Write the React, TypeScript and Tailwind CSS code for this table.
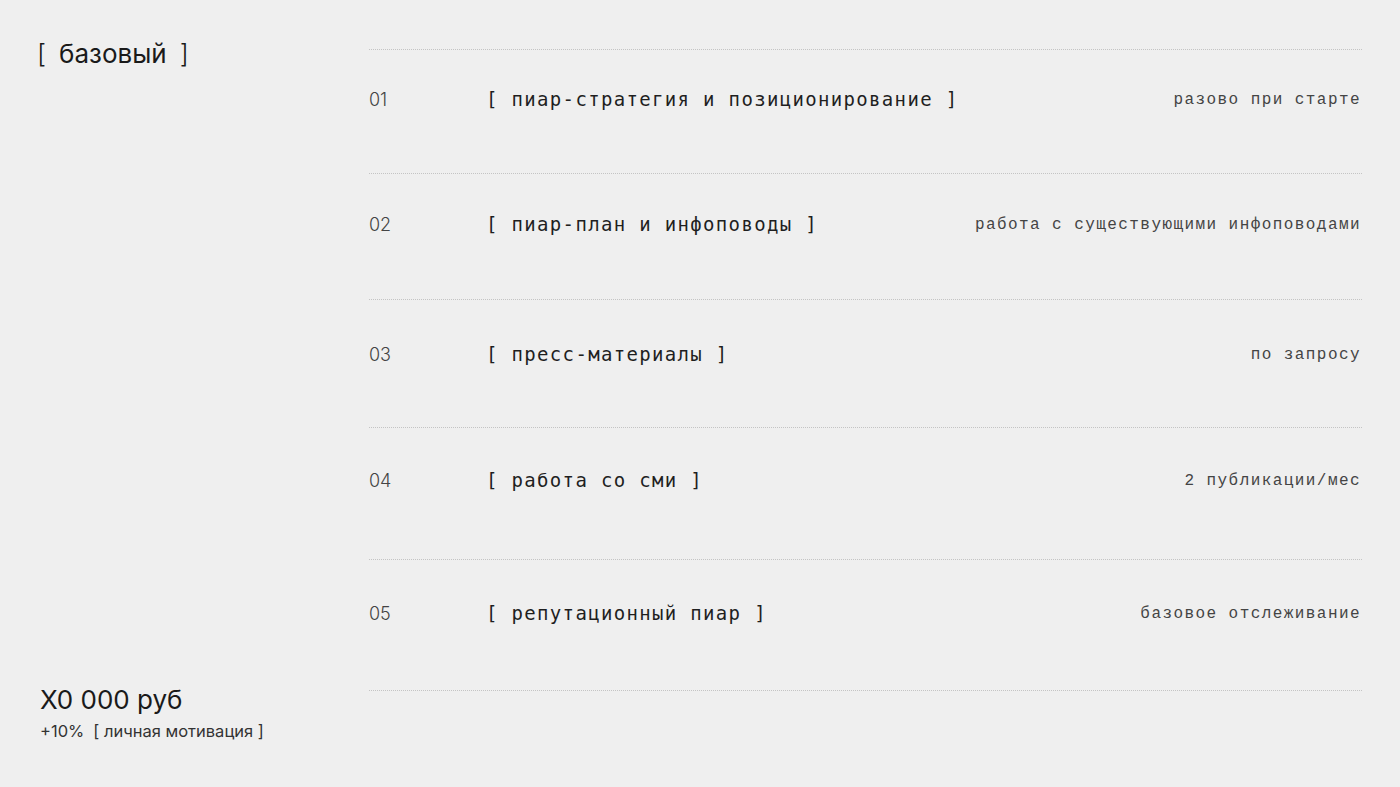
import React from "react";

const rows = [
  { num: "01", title: "пиар-стратегия и позиционирование", note: "разово при старте", h: "h-[124px]", pt: "pt-[40px]" },
  { num: "02", title: "пиар-план и инфоповоды", note: "работа с существующими инфоповодами", h: "h-[126px]", pt: "pt-[41px]" },
  { num: "03", title: "пресс-материалы", note: "по запросу", h: "h-[128px]", pt: "pt-[45px]" },
  { num: "04", title: "работа со сми", note: "2 публикации/мес", h: "h-[132px]", pt: "pt-[43px]" },
  { num: "05", title: "репутационный пиар", note: "базовое отслеживание", h: "h-[132px]", pt: "pt-[44px]" },
];

function App() {
  return (
    <div className="flex h-[787px] w-[1400px] bg-[#efefef] font-['Inter','Liberation_Sans',sans-serif] text-[#1a1a1a]">
      {/* left column: plan name and price */}
      <div className="flex w-[369px] flex-col justify-between pb-[46px] pl-[37px] pt-[38px]">
        <div className="flex items-center gap-[13px] text-[26px] leading-[32px]">
          <span className="font-light">[</span>
          <span>базовый</span>
          <span className="font-light">]</span>
        </div>
        <div className="pl-[3px]">
          <div className="text-[26px] leading-[32px]">X0 000 руб</div>
          <div className="mt-[5px] flex gap-[9px] text-[16.5px] leading-[20px] text-[#333]">
            <span>+10%</span>
            <span>[ личная мотивация ]</span>
          </div>
        </div>
      </div>

      {/* right column: list of services */}
      <div className="w-[993px] pt-[49px]">
        {rows.map((row, i) => (
          <div
            key={row.num}
            className={`flex items-start border-t border-dotted border-[#c4c4c4] ${row.h} ${row.pt} ${
              i === rows.length - 1 ? "border-b" : ""
            }`}
          >
            <div className="w-[117px] text-[18px] font-light leading-[20px] text-[#444]">{row.num}</div>
            <div className="-mt-px flex-1 font-['DejaVu_Sans_Mono',monospace] text-[19px] leading-[20px] tracking-[1.33px] text-[#1f1f1f]">
              [ {row.title} ]
            </div>
            <div className="pr-[1px] text-right font-['Liberation_Mono',monospace] text-[16px] leading-[20px] tracking-[1.43px] text-[#444]">
              {row.note}
            </div>
          </div>
        ))}
      </div>
    </div>
  );
}

export default App;
